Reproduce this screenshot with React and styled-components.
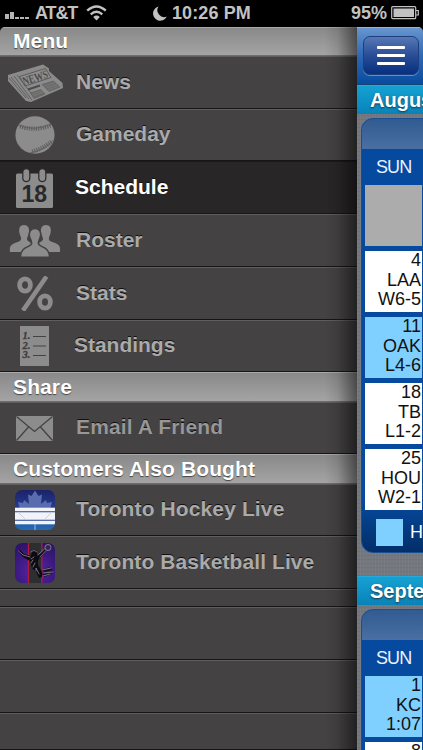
import React, { useState } from "react";
import styled, { createGlobalStyle } from "styled-components";

const NewsIcon = () => (
  <svg width="56" height="40" viewBox="0 0 56 40">
    <path
      d="M1 12 L36 1.5 L42 5.5 L42 8 L55.5 20 L56 25 L24 39 L19 38 L1 18 Z"
      fill="#8b8b8b"
    />
    <path
      d="M2 15 L19 35 M4 14 L22 36 M7 13 L25 37 M10 12 L27 34"
      stroke="#555"
      strokeWidth="0.8"
    />
    <path
      d="M12.5 13.5 L38.5 5.5 L44 14.5 L18 23 Z"
      fill="#8f8f8f"
      stroke="#555"
      strokeWidth="0.9"
    />
    <text
      x="17"
      y="22.5"
      transform="rotate(-18 17 22.5)"
      fontFamily="Liberation Serif, serif"
      fontWeight="bold"
      fontSize="12"
      textLength="26"
      lengthAdjust="spacingAndGlyphs"
      fill="#4b4b4b"
    >
      NEWS
    </text>
    <path d="M21 26.5 L33 22.5" stroke="#4b4b4b" strokeWidth="2" />
    <path
      d="M23.5 30 L34 26.5 L38 31 L27 35.5 Z M35 21.5 L46.5 18 L53 24 L42 28.5 Z"
      fill="#6b6b6b"
      stroke="#555"
      strokeWidth="0.5"
    />
    <path
      d="M25 31 L36 27.5 M26 33 L37 29 M37 23 L48 19.5 M39 25 L50 21.5 M41 27 L52 23"
      stroke="#858585"
      strokeWidth="0.5"
    />
  </svg>
);

const BallIcon = () => (
  <svg width="40" height="38" viewBox="0 0 40 38">
    <ellipse cx="20" cy="19" rx="19.6" ry="18.7" fill="#8c8c8c" />
    <path
      d="M3 9 Q19 16 37 8 M15 37 Q30 34 38.5 24"
      fill="none"
      stroke="#565656"
      strokeWidth="0.8"
    />
    <path
      d="M5 10.3 Q20 15.5 35.5 9.3 M17 35.5 Q29 32.5 37 25"
      fill="none"
      stroke="#606060"
      strokeWidth="4.2"
      strokeDasharray="1.2 1.1"
    />
  </svg>
);

const CalendarIcon = () => (
  <svg width="37" height="40" viewBox="0 0 37 40">
    <rect x="0" y="5.5" width="37" height="34.5" rx="1.5" fill="#8c8c8c" />
    <g fill="#8c8c8c" stroke="#2a2829" strokeWidth="1.2">
      <rect x="6.8" y="0.6" width="7" height="13" rx="3.5" />
      <rect x="22.8" y="0.6" width="7" height="13" rx="3.5" />
    </g>
    <text
      x="18.3"
      y="34"
      textAnchor="middle"
      fontFamily="Liberation Sans, sans-serif"
      fontWeight="bold"
      fontSize="23"
      fill="#2a2829"
    >
      18
    </text>
  </svg>
);

const RosterIcon = () => (
  <svg width="52" height="34" viewBox="0 0 52 34">
    <path
      d="M15 1 C19 1 20.5 4 20 8 C19.8 11 18 13 18 15 C18 19 27 18 27 28 L1 28 C0 20 4 20 10 17.5 C13 16 12.3 14 11 11 C9 5 10.5 1 15 1 Z"
      fill="#8c8c8c"
    />
    <path
      d="M37 1 C33 1 31.5 4 32 8 C32.2 11 34 13 34 15 C34 19 25 18 25 28 L51 28 C52 20 48 20 42 17.5 C39 16 39.7 14 41 11 C43 5 41.5 1 37 1 Z"
      fill="#8c8c8c"
    />
    <path
      d="M26 4.5 C30.5 4.5 32.2 8 31.5 12 C31 15 29.3 16.5 29.3 19 C29.3 24 40.5 21 40.5 33.3 L11.5 33.3 C11.5 21 22.7 24 22.7 19 C22.7 16.5 21 15 20.5 12 C19.8 8 21.5 4.5 26 4.5 Z"
      fill="#8c8c8c"
      stroke="#444243"
      strokeWidth="1.5"
    />
  </svg>
);

const PercentIcon = () => (
  <svg width="36" height="35" viewBox="0 0 36 35">
    <g fill="none" stroke="#8c8c8c">
      <ellipse cx="8" cy="9" rx="5.4" ry="6.2" strokeWidth="4.8" />
      <ellipse cx="28" cy="26" rx="5.4" ry="6.2" strokeWidth="4.8" />
      <path d="M29.5 0.5 L6 34.5" strokeWidth="4.6" />
    </g>
  </svg>
);

const StandingsIcon = () => (
  <svg width="29" height="40" viewBox="0 0 29 40">
    <rect width="29" height="40" fill="#8c8c8c" />
    <g
      fontFamily="Liberation Serif, serif"
      fontWeight="bold"
      fontStyle="italic"
      fontSize="10.5"
      fill="#3e3c3d"
      stroke="#3e3c3d"
      strokeWidth="0.3"
    >
      <text x="2.5" y="13">1.</text>
      <text x="2.5" y="22.5">2.</text>
      <text x="2.5" y="32">3.</text>
    </g>
    <path
      d="M13 10.5 H26 M13 20 H26 M13 29.5 H26"
      stroke="#444243"
      strokeWidth="1.2"
    />
  </svg>
);

const MailIcon = () => (
  <svg width="37" height="25" viewBox="0 0 37 25">
    <rect width="37" height="25" fill="#8c8c8c" />
    <path
      d="M0.5 0.5 L18.5 15.5 L36.5 0.5 M0.5 24.5 L12.5 11 M36.5 24.5 L24.5 11"
      fill="none"
      stroke="#444243"
      strokeWidth="1.3"
    />
  </svg>
);

const HockeyIcon = () => (
  <svg width="40" height="40" viewBox="0 0 40 40">
    <defs>
      <linearGradient id="ice" x1="0" y1="0" x2="0" y2="1">
        <stop offset="0" stopColor="#1b2268" />
        <stop offset="0.45" stopColor="#273c90" />
        <stop offset="1" stopColor="#236bb5" />
      </linearGradient>
      <clipPath id="tile">
        <rect width="40" height="40" rx="7" />
      </clipPath>
    </defs>
    <g clipPath="url(#tile)">
      <rect width="40" height="40" fill="url(#ice)" />
      <path
        d="M20 0.5 L23.5 6 L27 4.5 L26 14 L31 10 L32 13 L37 12 L35.5 18 L38 20 H2 L4.5 18 L3 12 L8 13 L9 10 L14 14 L13 4.5 L16.5 6 Z"
        fill="#596cae"
      />
      <rect y="17.7" width="40" height="16.6" fill="#f1f3f9" />
      <path d="M0 21.7 H40 M0 30.3 H40" stroke="#28438f" strokeWidth="1.1" />
      <path d="M3 22 L10 29 M37 22 L30 29" stroke="#cdd1df" strokeWidth="1" />
      <path d="M20 34 V40" stroke="#9bbbe0" strokeWidth="1" />
    </g>
  </svg>
);

const BasketballIcon = () => (
  <svg width="40" height="40" viewBox="0 0 40 40">
    <defs>
      <radialGradient id="court" cx="0.5" cy="0.7" r="0.75">
        <stop offset="0" stopColor="#5824ad" />
        <stop offset="1" stopColor="#2c1468" />
      </radialGradient>
    </defs>
    <rect width="40" height="40" rx="7" fill="url(#court)" />
    <path d="M13.5 0 H27 V40 H13.5 Z" fill="#2c2e2f" />
    <path d="M13.5 0 V40 M26.8 0 V40" stroke="#b5193a" strokeWidth="1.3" />
    <path
      d="M3 8 L5 7 L9 11 L16 13 L17 8 Q19 5.500 22 8 L22 12 L25 11 L30 5 L32 7 L27 13 L23 17 L23 22 L27 29 L27 34 L24 35 L21 29 L17 25 L15 18 L8 14 Z"
      fill="#0d0b10"
    />
    <path
      d="M25 27 L35 24 L38 27 L30 29 M27 31 L38 28 L37 31 L29 34"
      fill="#15101f"
    />
    <g fill="none" stroke="#93889d" strokeWidth="0.8" strokeLinecap="round">
      <path d="M3.5 8 L8 12 L15 14 M23 12 L30 5.5 M25 14 L31 7.500" />
      <path d="M16 9 Q19 6 22 9 M16 16 L19 14 M16 20 L18 17 M18 24 L20 20 M21 28 L21 25 L24 31" />
      <path d="M27 27 L36 25 M29 30 L38 29 M28 33 L35 31" />
    </g>
    <circle cx="33" cy="4.5" r="3" fill="#302748" stroke="#8d83a5" strokeWidth="0.9" />
  </svg>
);

const WifiIcon = () => (
  <svg width="21" height="16" viewBox="0 0 21 16">
    <g fill="none" stroke="#c2c2c2" strokeWidth="2.4">
      <path d="M1.2 5.7 Q10.5 -2.7 19.8 5.7" />
      <path d="M4.7 9.3 Q10.5 4.2 16.3 9.3" />
    </g>
    <path d="M7.2 12 Q10.5 9.2 13.8 12 L10.5 15.5 Z" fill="#c2c2c2" />
  </svg>
);

const MoonIcon = () => (
  <svg width="14" height="15" viewBox="0 0 14 15">
    <path
      d="M5.5 0.5 A7.2 7.2 0 1 0 13.8 10.5 A6.8 6.8 0 0 1 5.5 0.5 Z"
      fill="#c2c2c2"
    />
  </svg>
);

const BatteryIcon = () => (
  <svg width="28" height="14" viewBox="0 0 28 14">
    <rect x="0.7" y="0.7" width="24" height="12" rx="1" fill="none" stroke="#c2c2c2" strokeWidth="1.2" />
    <rect x="2.5" y="2.5" width="20.5" height="8.5" fill="#c2c2c2" />
    <path d="M25 4.5 H27.3 V9 H25" fill="none" stroke="#c2c2c2" strokeWidth="1.2" />
  </svg>
);

const sections = [
  {
    title: "Menu",
    height: 29,
    items: [
      { label: "News", icon: NewsIcon, height: 53, spacing: 0 },
      { label: "Gameday", icon: BallIcon, height: 52, spacing: 0 },
      { label: "Schedule", icon: CalendarIcon, height: 53, spacing: 0, shift: 1 },
      { label: "Roster", icon: RosterIcon, height: 53, spacing: 0 },
      { label: "Stats", icon: PercentIcon, height: 53, spacing: 0 },
      { label: "Standings", icon: StandingsIcon, height: 52, spacing: -0.02, shift: 2 },
    ],
  },
  {
    title: "Share",
    height: 30,
    items: [
      { label: "Email A Friend", icon: MailIcon, height: 52, spacing: 0.12, dim: true },
    ],
  },
  {
    title: "Customers Also Bought",
    height: 30,
    items: [
      { label: "Toronto Hockey Live", icon: HockeyIcon, height: 52, spacing: 0.12 },
      { label: "Toronto Basketball Live", icon: BasketballIcon, height: 53, spacing: 0.08 },
    ],
  },
];

const fillerRows = [18, 53, 53, 37];

const months = [
  {
    name: "August",
    days: [
      { empty: true },
      { day: "4", team: "LAA", result: "W6-5" },
      { day: "11", team: "OAK", result: "L4-6", home: true },
      { day: "18", team: "TB", result: "L1-2" },
      { day: "25", team: "HOU", result: "W2-1" },
    ],
  },
  {
    name: "September",
    days: [
      { day: "1", team: "KC", result: "1:07", home: true },
      { day: "8", team: "", result: "" },
    ],
  },
];

const Month = ({ month }) => (
  <>
    <MonthBar>{month.name}</MonthBar>
    <Card>
      <CardTop />
      <WeekDay>SUN</WeekDay>
      <Days>
        {month.days.map((d, index) => (
          <Day key={index} $home={d.home} $empty={d.empty}>
            <span>{d.day}</span>
            <span>{d.team}</span>
            <span>{d.result}</span>
          </Day>
        ))}
      </Days>
      <Legend>
        <Swatch />
        Home
      </Legend>
    </Card>
  </>
);

const App = () => {
  const [selected, setSelected] = useState("Schedule");

  return (
    <>
      <GlobalStyle />
      <Screen>
        <StatusBar>
          <Signal>
            <Bar $h={5} />
            <Bar $h={7} />
            <Bar $h={2} />
            <Bar $h={2} />
            <Bar $h={2} />
          </Signal>
          <Carrier>AT&amp;T</Carrier>
          <WifiIcon />
          <Clock>
            <MoonIcon />
            10:26 PM
          </Clock>
          <Battery>
            95%
            <BatteryIcon />
          </Battery>
        </StatusBar>
        <Body>
          <Menu>
            {sections.map((section) => (
              <React.Fragment key={section.title}>
                <SectionTitle $h={section.height}>{section.title}</SectionTitle>
                {section.items.map((item) => (
                  <Row
                    key={item.label}
                    $h={item.height}
                    $active={item.label === selected}
                    onClick={() => setSelected(item.label)}
                  >
                    <IconBox $shift={item.shift}>
                      <item.icon />
                    </IconBox>
                    <Label
                      $active={item.label === selected}
                      $dim={item.dim}
                      $spacing={item.spacing}
                    >
                      {item.label}
                    </Label>
                  </Row>
                ))}
              </React.Fragment>
            ))}
            {fillerRows.map((height, index) => (
              <Row key={index} $h={height} />
            ))}
          </Menu>
          <Pane>
            <NavBar>
              <MenuButton aria-label="Menu">
                <Line />
                <Line />
                <Line />
              </MenuButton>
            </NavBar>
            {months.map((month) => (
              <Month key={month.name} month={month} />
            ))}
          </Pane>
        </Body>
      </Screen>
    </>
  );
};

const GlobalStyle = createGlobalStyle`
  * {
    box-sizing: border-box;
  }

  body {
    margin: 0;
    background: #000;
    overflow: hidden;
    font-family: "Liberation Sans", Arial, sans-serif;
  }

  svg {
    display: block;
    flex-shrink: 0;
  }
`;

const Screen = styled.div`
  width: 423px;
  height: 750px;
  overflow: hidden;
  display: flex;
  flex-direction: column;
`;

const StatusBar = styled.div`
  height: 27px;
  flex-shrink: 0;
  display: flex;
  align-items: center;
  padding: 0 4px 1px 5px;
  background: #000;
  color: #c2c2c2;
  font-size: 18px;
  font-weight: 700;
  white-space: nowrap;
`;

const Signal = styled.div`
  display: flex;
  align-items: flex-end;
  gap: 1px;
  width: 30px;
  height: 8px;
  margin-top: 4px;
`;

const Bar = styled.div`
  width: 4px;
  height: ${(p) => p.$h}px;
  background: #b5b5b5;
`;

const Carrier = styled.span`
  width: 51px;
  letter-spacing: -1.1px;
`;

const Clock = styled.div`
  display: flex;
  align-items: center;
  gap: 5px;
  margin-left: 46px;
  letter-spacing: 0.1px;
`;

const Battery = styled.div`
  display: flex;
  align-items: center;
  gap: 4px;
  margin-left: auto;
`;

const Body = styled.div`
  display: flex;
  flex: 1;
  min-height: 0;
  border-radius: 5px 5px 0 0;
  overflow: hidden;
`;

const Menu = styled.div`
  position: relative;
  width: 357px;
  flex-shrink: 0;
  background: #444243;

  &::after {
    content: "";
    position: absolute;
    inset: 0 0 0 auto;
    width: 32px;
    background: linear-gradient(to right, transparent, rgba(0, 0, 0, 0.1) 40%, rgba(0, 0, 0, 0.5));
    pointer-events: none;
  }
`;

const SectionTitle = styled.div`
  height: ${(p) => p.$h}px;
  padding-left: 13px;
  line-height: ${(p) => p.$h - 3}px;
  background: linear-gradient(#8a8989, #a5a4a4);
  border-top: 1px solid #aaa9a9;
  border-bottom: 1px solid #6f6e6e;
  color: #fff;
  font-size: 21px;
  font-weight: 700;
  letter-spacing: 0.12px;
  text-shadow: 0 1px 1px #444;
`;

const Row = styled.div`
  height: ${(p) => p.$h}px;
  display: flex;
  align-items: center;
  background: ${(p) => (p.$active ? "#282627" : "#444243")};
  border-top: 1px solid ${(p) => (p.$active ? "#1b191a" : "#5f5d5e")};
  border-bottom: 1px solid #171516;
`;

const IconBox = styled.div`
  width: 69px;
  margin-right: ${(p) => 7 - (p.$shift || 0)}px;
  display: flex;
  justify-content: center;
`;

const Label = styled.span`
  padding-bottom: 2px;
  color: ${(p) => (p.$active ? "#fff" : p.$dim ? "#979797" : "#aaa")};
  font-size: 21px;
  font-weight: 700;
  letter-spacing: ${(p) => p.$spacing}px;
  text-shadow: 0 -1px 0 #111;
  white-space: nowrap;
`;

const Pane = styled.div`
  flex: 1;
  min-width: 0;
  overflow: hidden;
  background:
    repeating-linear-gradient(90deg, rgba(255, 255, 255, 0.04) 0 1px, transparent 1px 3px),
    repeating-linear-gradient(rgba(0, 0, 0, 0.04) 0 1px, transparent 1px 4px),
    #74777d;
`;

const NavBar = styled.div`
  height: 58px;
  padding: 8px 0 0 6px;
  background: linear-gradient(#6795ce, #2e67b5 50%, #084c9f);
  border-top: 1px solid #94b5df;
  border-bottom: 1px solid #174474;
`;

const MenuButton = styled.button`
  width: 56px;
  height: 39px;
  padding: 0;
  display: flex;
  flex-direction: column;
  align-items: center;
  justify-content: center;
  gap: 5px;
  border: 1px solid #1d3f7e;
  border-radius: 7px;
  background: linear-gradient(#5778b4, #294d96 50%, #07307f);
  box-shadow: 0 1px 0 #638fc8;
`;

const Line = styled.span`
  width: 28px;
  height: 3px;
  border-radius: 1px;
  background: #fff;
`;

const MonthBar = styled.div`
  height: 29px;
  padding-left: 13px;
  line-height: 29px;
  background: linear-gradient(#16a1d3, #0883b8);
  color: #fff;
  font-size: 20px;
  font-weight: 700;
  text-shadow: 0 1px 2px #234;
  border-top: 1px solid #25a9d8;
`;

const Card = styled.div`
  width: 420px;
  height: 435px;
  margin: 4px 0 23px 4px;
  overflow: hidden;
  border: 1px solid #174e94;
  border-radius: 12px;
  background: linear-gradient(#054a9f 88%, #032e68);
`;

const CardTop = styled.div`
  height: 30px;
  background: linear-gradient(#315b91, #4a6fa3);
`;

const WeekDay = styled.div`
  height: 36px;
  padding-left: 14px;
  line-height: 37px;
  color: #e9f2ff;
  font-size: 18px;
  letter-spacing: -0.9px;
`;

const Days = styled.div`
  display: flex;
  flex-direction: column;
  gap: 5px;
  padding-left: 3px;
`;

const Day = styled.div`
  width: 57px;
  height: 61px;
  padding-right: 1px;
  display: flex;
  flex-direction: column;
  align-items: flex-end;
  background: ${(p) => (p.$empty ? "#acacac" : p.$home ? "#80d0ff" : "#fff")};
  color: #111;
  font-size: 18px;
  line-height: 19.6px;
`;

const Legend = styled.div`
  display: flex;
  align-items: center;
  gap: 7px;
  padding: 9px 0 0 14px;
  color: #fff;
  font-size: 18px;
`;

const Swatch = styled.div`
  width: 27px;
  height: 27px;
  background: #80d0ff;
`;

export default App;
